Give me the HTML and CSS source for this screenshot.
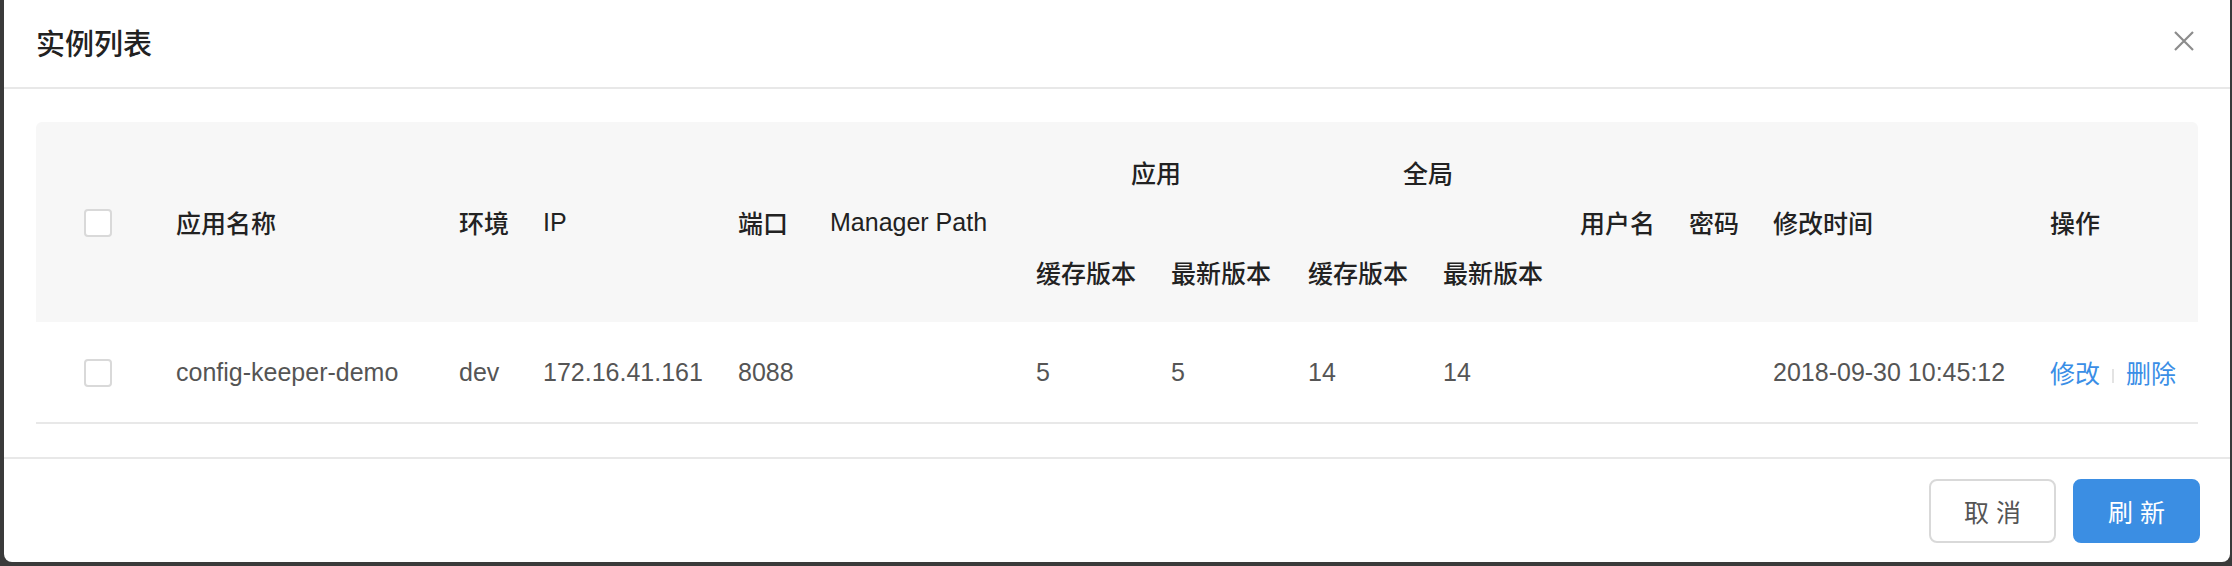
FILE: index.html
```html
<!DOCTYPE html>
<html lang="zh-CN">
<head>
    <meta charset="UTF-8">
    <title>实例列表</title>
    <link rel="stylesheet" href="styles.css">
</head>
<body>
    <div class="modal">
        <div class="modal-header">
            <div class="modal-title">实例列表</div>
            <svg class="close" width="20" height="20" viewBox="0 0 20 20">
                <path d="M1 1 L19 19 M19 1 L1 19" stroke="#8c8c8c" stroke-width="2.2" fill="none"/>
            </svg>
        </div>

        <div class="modal-body">
            <div class="table-wrap">
                <table class="grid">
                    <colgroup>
                        <col style="width:124px">
                        <col style="width:283px">
                        <col style="width:84px">
                        <col style="width:195px">
                        <col style="width:92px">
                        <col style="width:206px">
                        <col style="width:135px">
                        <col style="width:137px">
                        <col style="width:135px">
                        <col style="width:137px">
                        <col style="width:109px">
                        <col style="width:84px">
                        <col style="width:277px">
                        <col style="width:164px">
                    </colgroup>
                    <thead>
                        <tr>
                            <th rowspan="2" class="sel"><span class="check"></span></th>
                            <th rowspan="2">应用名称</th>
                            <th rowspan="2">环境</th>
                            <th rowspan="2">IP</th>
                            <th rowspan="2">端口</th>
                            <th rowspan="2">Manager Path</th>
                            <th colspan="2" class="group">应用</th>
                            <th colspan="2" class="group">全局</th>
                            <th rowspan="2">用户名</th>
                            <th rowspan="2">密码</th>
                            <th rowspan="2">修改时间</th>
                            <th rowspan="2">操作</th>
                        </tr>
                        <tr>
                            <th>缓存版本</th>
                            <th>最新版本</th>
                            <th>缓存版本</th>
                            <th>最新版本</th>
                        </tr>
                    </thead>
                    <tbody>
                        <tr>
                            <td class="sel"><span class="check"></span></td>
                            <td>config-keeper-demo</td>
                            <td>dev</td>
                            <td>172.16.41.161</td>
                            <td>8088</td>
                            <td></td>
                            <td>5</td>
                            <td>5</td>
                            <td>14</td>
                            <td>14</td>
                            <td></td>
                            <td></td>
                            <td>2018-09-30 10:45:12</td>
                            <td>
                                <a class="action">修改</a><span class="divider"></span><a class="action">删除</a>
                            </td>
                        </tr>
                    </tbody>
                </table>
            </div>
        </div>

        <div class="modal-footer">
            <button class="btn">取 消</button>
            <button class="btn btn-primary">刷 新</button>
        </div>
    </div>
</body>
</html>
```

FILE: styles.css
```css
html, body {
    margin: 0;
    height: 100%;
    overflow: hidden;
}

body {
    background: #3a3a3a;
    font-family: "Liberation Sans", "Noto Sans CJK SC", sans-serif;
    font-size: 25px;
    color: #555;
}

.modal {
    margin-left: 4px;
    width: 2226px;
    height: 562px;
    background: #fff;
    border-radius: 0 0 8px 8px;
    display: flex;
    flex-direction: column;
}

.modal-header {
    height: 87px;
    border-bottom: 2px solid #e8e8e8;
    display: flex;
    align-items: center;
    justify-content: space-between;
    padding: 0 36px 0 32px;
}

.modal-title {
    font-size: 29px;
    font-weight: 500;
    color: #222;
    margin-top: -3px;
}

.close {
    margin-top: -5px;
}

.modal-body {
    height: 368px;
    box-sizing: border-box;
    padding: 33px 32px 0;
}

.table-wrap {
    border-radius: 6px 6px 0 0;
    overflow: hidden;
}

.grid {
    width: 2162px;
    table-layout: fixed;
    border-collapse: collapse;
}

.grid th,
.grid td {
    padding: 0 16px;
    text-align: left;
    white-space: nowrap;
}

.grid th {
    height: 100px;
    background: #f7f7f7;
    color: #222;
    font-weight: 500;
}

.grid th.group {
    text-align: center;
}

.grid td {
    height: 100px;
    border-bottom: 2px solid #e8e8e8;
}

.grid .sel {
    text-align: center;
    padding: 0;
}

.check {
    display: inline-block;
    width: 24px;
    height: 24px;
    border: 2px solid #d9d9d9;
    border-radius: 4px;
    background: #fff;
    vertical-align: middle;
}

.action {
    color: #3a8ee6;
    cursor: pointer;
}

.divider {
    display: inline-block;
    width: 2px;
    height: 14px;
    margin: 0 12px;
    background: #e3e3e3;
    vertical-align: middle;
}

.modal-footer {
    flex: 1;
    border-top: 2px solid #e8e8e8;
    display: flex;
    justify-content: flex-end;
    align-items: center;
    gap: 17px;
    padding-right: 30px;
}

.btn {
    width: 127px;
    height: 64px;
    font-family: inherit;
    font-size: 25px;
    color: #555;
    background: #fff;
    border: 2px solid #d9d9d9;
    border-radius: 8px;
}

.btn-primary {
    color: #fff;
    background: #3b8ee3;
    border-color: #3b8ee3;
}
```
